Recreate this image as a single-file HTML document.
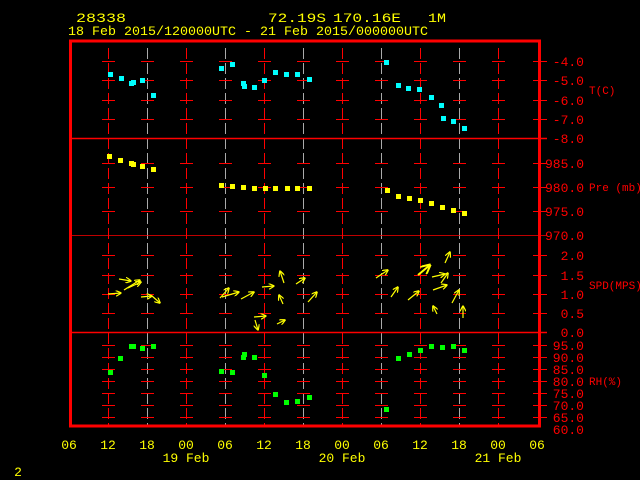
<!DOCTYPE html>
<html><head><style>
html,body{margin:0;padding:0;background:#000;width:640px;height:480px;overflow:hidden}
svg{display:block}
text{font-family:"Liberation Mono",monospace}
</style></head><body>
<svg width="640" height="480" viewBox="0 0 640 480" xmlns="http://www.w3.org/2000/svg">
<defs>
<marker id="ah" viewBox="0 0 10 10" refX="9" refY="5" markerWidth="5" markerHeight="5" orient="auto"><path d="M0,0 L10,5 L0,10" fill="none" stroke="#ff0" stroke-width="2"/></marker>
</defs>
<g fill="#ff0" font-size="13">
<text x="76" y="22" textLength="50" lengthAdjust="spacingAndGlyphs">28338</text>
<text x="268" y="22" textLength="58" lengthAdjust="spacingAndGlyphs">72.19S</text>
<text x="333" y="22" textLength="68" lengthAdjust="spacingAndGlyphs">170.16E</text>
<text x="428" y="22" textLength="18" lengthAdjust="spacingAndGlyphs">1M</text>
<text x="68" y="35" textLength="360" lengthAdjust="spacingAndGlyphs">18 Feb 2015/120000UTC - 21 Feb 2015/000000UTC</text>
</g>
<!-- grid -->
<g stroke="#f00" stroke-width="1" stroke-dasharray="11,4">
<line x1="108.5" y1="48" x2="108.5" y2="426"/><line x1="147.5" y1="48" x2="147.5" y2="426" stroke="#aaa"/>
<line x1="186.5" y1="48" x2="186.5" y2="426"/><line x1="225.5" y1="48" x2="225.5" y2="426" stroke="#aaa"/>
<line x1="264.5" y1="48" x2="264.5" y2="426"/><line x1="303.5" y1="48" x2="303.5" y2="426" stroke="#aaa"/>
<line x1="342.5" y1="48" x2="342.5" y2="426"/><line x1="381.5" y1="48" x2="381.5" y2="426" stroke="#aaa"/>
<line x1="420.5" y1="48" x2="420.5" y2="426"/><line x1="459.5" y1="48" x2="459.5" y2="426" stroke="#aaa"/>
<line x1="498.5" y1="48" x2="498.5" y2="426"/>
</g>
<path stroke="#f00" stroke-width="1" fill="none" d="
M102 61.5h13m26 0h13m26 0h13m26 0h13m26 0h13m26 0h13m26 0h13m26 0h13m26 0h13m26 0h13m26 0h13
M102 80.5h13m26 0h13m26 0h13m26 0h13m26 0h13m26 0h13m26 0h13m26 0h13m26 0h13m26 0h13m26 0h13
M102 100.5h13m26 0h13m26 0h13m26 0h13m26 0h13m26 0h13m26 0h13m26 0h13m26 0h13m26 0h13m26 0h13
M102 119.5h13m26 0h13m26 0h13m26 0h13m26 0h13m26 0h13m26 0h13m26 0h13m26 0h13m26 0h13m26 0h13
M102 163.5h13m26 0h13m26 0h13m26 0h13m26 0h13m26 0h13m26 0h13m26 0h13m26 0h13m26 0h13m26 0h13
M102 187.5h13m26 0h13m26 0h13m26 0h13m26 0h13m26 0h13m26 0h13m26 0h13m26 0h13m26 0h13m26 0h13
M102 211.5h13m26 0h13m26 0h13m26 0h13m26 0h13m26 0h13m26 0h13m26 0h13m26 0h13m26 0h13m26 0h13
M102 255.5h13m26 0h13m26 0h13m26 0h13m26 0h13m26 0h13m26 0h13m26 0h13m26 0h13m26 0h13m26 0h13
M102 275.5h13m26 0h13m26 0h13m26 0h13m26 0h13m26 0h13m26 0h13m26 0h13m26 0h13m26 0h13m26 0h13
M102 294.5h13m26 0h13m26 0h13m26 0h13m26 0h13m26 0h13m26 0h13m26 0h13m26 0h13m26 0h13m26 0h13
M102 313.5h13m26 0h13m26 0h13m26 0h13m26 0h13m26 0h13m26 0h13m26 0h13m26 0h13m26 0h13m26 0h13
M102 345.5h13m26 0h13m26 0h13m26 0h13m26 0h13m26 0h13m26 0h13m26 0h13m26 0h13m26 0h13m26 0h13
M102 357.5h13m26 0h13m26 0h13m26 0h13m26 0h13m26 0h13m26 0h13m26 0h13m26 0h13m26 0h13m26 0h13
M102 369.5h13m26 0h13m26 0h13m26 0h13m26 0h13m26 0h13m26 0h13m26 0h13m26 0h13m26 0h13m26 0h13
M102 381.5h13m26 0h13m26 0h13m26 0h13m26 0h13m26 0h13m26 0h13m26 0h13m26 0h13m26 0h13m26 0h13
M102 393.5h13m26 0h13m26 0h13m26 0h13m26 0h13m26 0h13m26 0h13m26 0h13m26 0h13m26 0h13m26 0h13
M102 405.5h13m26 0h13m26 0h13m26 0h13m26 0h13m26 0h13m26 0h13m26 0h13m26 0h13m26 0h13m26 0h13
M102 417.5h13m26 0h13m26 0h13m26 0h13m26 0h13m26 0h13m26 0h13m26 0h13m26 0h13m26 0h13m26 0h13
M533 61.5h14M533 80.5h14M533 100.5h14M533 119.5h14M533 163.5h14M533 187.5h14M533 211.5h14M533 255.5h14M533 275.5h14M533 294.5h14M533 313.5h14M533 345.5h14M533 357.5h14M533 369.5h14M533 381.5h14M533 393.5h14M533 405.5h14M533 417.5h14"/>
<g stroke="#f00">
<line x1="70" y1="138.5" x2="547" y2="138.5" stroke-width="1.5"/>
<line x1="70" y1="235.5" x2="547" y2="235.5" stroke-width="0.8"/>
<line x1="70" y1="332.5" x2="547" y2="332.5" stroke-width="1.5"/>
</g>
<rect x="70.5" y="41" width="469" height="385" fill="none" stroke="#f00" stroke-width="3"/>
<!-- T -->
<g fill="#0ff">
<rect x="108" y="72" width="5" height="5"/><rect x="119" y="76" width="5" height="5"/><rect x="129" y="81" width="5" height="5"/><rect x="131" y="80" width="5" height="5"/><rect x="140" y="78" width="5" height="5"/><rect x="151" y="93" width="5" height="5"/>
<rect x="219" y="66" width="5" height="5"/><rect x="230" y="62" width="5" height="5"/><rect x="241" y="81" width="5" height="5"/><rect x="242" y="84" width="5" height="5"/><rect x="252" y="85" width="5" height="5"/><rect x="262" y="78" width="5" height="5"/><rect x="273" y="70" width="5" height="5"/><rect x="284" y="72" width="5" height="5"/><rect x="295" y="72" width="5" height="5"/><rect x="307" y="77" width="5" height="5"/>
<rect x="384" y="60" width="5" height="5"/><rect x="396" y="83" width="5" height="5"/><rect x="406" y="86" width="5" height="5"/><rect x="417" y="87" width="5" height="5"/><rect x="429" y="95" width="5" height="5"/><rect x="439" y="103" width="5" height="5"/><rect x="441" y="116" width="5" height="5"/><rect x="451" y="119" width="5" height="5"/><rect x="462" y="126" width="5" height="5"/>
</g>
<!-- Pre -->
<g fill="#ff0">
<rect x="107" y="154" width="5" height="5"/><rect x="118" y="158" width="5" height="5"/><rect x="129" y="161" width="5" height="5"/><rect x="131" y="162" width="5" height="5"/><rect x="140" y="164" width="5" height="5"/><rect x="151" y="167" width="5" height="5"/>
<rect x="219" y="183" width="5" height="5"/><rect x="230" y="184" width="5" height="5"/><rect x="241" y="185" width="5" height="5"/><rect x="252" y="186" width="5" height="5"/><rect x="263" y="186" width="5" height="5"/><rect x="273" y="186" width="5" height="5"/><rect x="285" y="186" width="5" height="5"/><rect x="295" y="186" width="5" height="5"/><rect x="307" y="186" width="5" height="5"/>
<rect x="385" y="188" width="5" height="5"/><rect x="396" y="194" width="5" height="5"/><rect x="407" y="196" width="5" height="5"/><rect x="418" y="198" width="5" height="5"/><rect x="429" y="201" width="5" height="5"/><rect x="440" y="205" width="5" height="5"/><rect x="451" y="208" width="5" height="5"/><rect x="462" y="211" width="5" height="5"/>
</g>
<!-- RH -->
<g fill="#0f0">
<rect x="108" y="370" width="5" height="5"/><rect x="118" y="356" width="5" height="5"/><rect x="129" y="344" width="5" height="5"/><rect x="131" y="344" width="5" height="5"/><rect x="140" y="346" width="5" height="5"/><rect x="151" y="344" width="5" height="5"/>
<rect x="219" y="369" width="5" height="5"/><rect x="230" y="370" width="5" height="5"/><rect x="241" y="355" width="5" height="5"/><rect x="242" y="352" width="5" height="5"/><rect x="252" y="355" width="5" height="5"/><rect x="262" y="373" width="5" height="5"/><rect x="273" y="392" width="5" height="5"/><rect x="284" y="400" width="5" height="5"/><rect x="295" y="399" width="5" height="5"/><rect x="307" y="395" width="5" height="5"/>
<rect x="384" y="407" width="5" height="5"/><rect x="396" y="356" width="5" height="5"/><rect x="407" y="352" width="5" height="5"/><rect x="418" y="348" width="5" height="5"/><rect x="429" y="344" width="5" height="5"/><rect x="440" y="345" width="5" height="5"/><rect x="451" y="344" width="5" height="5"/><rect x="462" y="348" width="5" height="5"/>
</g>
<!-- wind arrows -->
<g stroke="#ff0" stroke-width="1.2" marker-end="url(#ah)" fill="none">
<line x1="108" y1="294" x2="121" y2="293"/><line x1="119" y1="279" x2="131" y2="281"/><line x1="124" y1="290" x2="140" y2="280"/><line x1="128" y1="288" x2="141" y2="282"/>
<line x1="141" y1="297" x2="152" y2="296"/><line x1="152" y1="296" x2="160" y2="303"/>
<line x1="220" y1="298" x2="229" y2="288"/><line x1="222" y1="297" x2="239" y2="292"/><line x1="241" y1="299" x2="254" y2="292"/>
<line x1="262" y1="287" x2="274" y2="286"/><line x1="284" y1="283" x2="280" y2="271"/><line x1="296" y1="284" x2="305" y2="278"/>
<line x1="283" y1="304" x2="279" y2="295"/><line x1="308" y1="302" x2="317" y2="292"/>
<line x1="254" y1="317" x2="266" y2="316"/><line x1="255" y1="320" x2="258" y2="330"/><line x1="277" y1="324" x2="285" y2="320"/>
<line x1="376" y1="278" x2="388" y2="270"/><line x1="391" y1="297" x2="398" y2="287"/><line x1="408" y1="300" x2="419" y2="291"/>
<line x1="418" y1="275" x2="430" y2="265" stroke-width="2"/><line x1="432" y1="277" x2="445" y2="274"/><line x1="433" y1="290" x2="447" y2="285"/>
<line x1="441" y1="283" x2="448" y2="273"/><line x1="445" y1="263" x2="450" y2="252"/><line x1="452" y1="303" x2="459" y2="290"/>
<line x1="463" y1="318" x2="463" y2="306"/><line x1="437" y1="314" x2="433" y2="306"/>
</g>
<!-- right labels -->
<g fill="#f00" font-size="13" text-anchor="end">
<text x="584" y="66">-4.0</text><text x="584" y="85">-5.0</text><text x="584" y="105">-6.0</text><text x="584" y="124">-7.0</text><text x="584" y="143">-8.0</text>
<text x="584" y="168">985.0</text><text x="584" y="192">980.0</text><text x="584" y="216">975.0</text><text x="584" y="240">970.0</text>
<text x="584" y="260">2.0</text><text x="584" y="280">1.5</text><text x="584" y="299">1.0</text><text x="584" y="318">0.5</text><text x="584" y="337">0.0</text>
<text x="584" y="350">95.0</text><text x="584" y="362">90.0</text><text x="584" y="374">85.0</text><text x="584" y="386">80.0</text><text x="584" y="398">75.0</text><text x="584" y="410">70.0</text><text x="584" y="422">65.0</text><text x="584" y="434">60.0</text>
</g>
<g fill="#f00" font-size="11">
<text x="589" y="94">T(C)</text><text x="589" y="191">Pre (mb)</text><text x="589" y="289">SPD(MPS)</text><text x="589" y="385">RH(%)</text>
</g>
<!-- bottom -->
<g fill="#ff0" font-size="13" text-anchor="middle">
<text x="69" y="449">06</text><text x="108" y="449">12</text><text x="147" y="449">18</text><text x="186" y="449">00</text><text x="225" y="449">06</text><text x="264" y="449">12</text><text x="303" y="449">18</text><text x="342" y="449">00</text><text x="381" y="449">06</text><text x="420" y="449">12</text><text x="459" y="449">18</text><text x="498" y="449">00</text><text x="537" y="449">06</text>
<text x="186" y="462">19 Feb</text><text x="342" y="462">20 Feb</text><text x="498" y="462">21 Feb</text>
<text x="18" y="476">2</text>
</g>
</svg>
</body></html>
